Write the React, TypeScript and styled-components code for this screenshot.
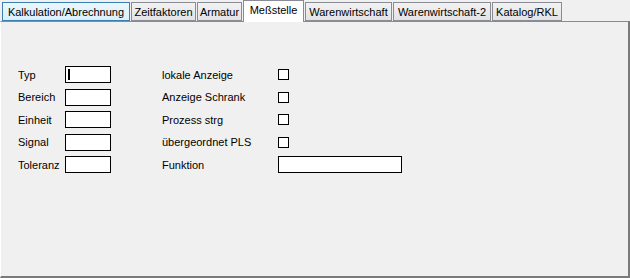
import styled, { createGlobalStyle } from 'styled-components';

const GlobalStyle = createGlobalStyle`
  html, body {
    margin: 0;
    padding: 0;
    background: #f0f0f0;
  }
  body {
    font-family: "Liberation Sans", Arial, sans-serif;
    font-size: 11px;
    color: #000;
  }
`;

const Window = styled.div`
  width: 630px;
  height: 278px;
  display: flex;
  flex-direction: column;
  background: #f0f0f0;
`;

const TabStrip = styled.div`
  height: 21px;
  padding-left: 2px;
  display: flex;
  align-items: flex-end;
  gap: 1px;
`;

const Tab = styled.div<{ $width: number; $active?: boolean; $hover?: boolean }>`
  position: relative;
  z-index: ${p => (p.$active ? 2 : 1)};
  box-sizing: border-box;
  width: ${p => p.$width}px;
  height: ${p => (p.$active ? 22 : 19)}px;
  margin-bottom: ${p => (p.$active ? -1 : 0)}px;
  display: flex;
  align-items: center;
  justify-content: center;
  padding-bottom: ${p => (p.$active ? 3 : 0)}px;
  border: 1px solid ${p => (p.$hover ? '#3c7fb1' : '#898c95')};
  border-bottom: ${p => (p.$active ? 'none' : undefined)};
  background: ${p =>
    p.$active
      ? '#ffffff'
      : p.$hover
      ? 'linear-gradient(#eaf6fd, #d9f0fc)'
      : 'linear-gradient(#f2f2f2, #e3e3e3)'};
  white-space: nowrap;
`;

const Panel = styled.div`
  flex: 1;
  box-sizing: border-box;
  border-top: 1px solid #898c95;
  border-left: 1px solid #ffffff;
  border-right: 2px solid #7a7a7a;
  border-bottom: 2px solid #7a7a7a;
  padding: 44px 0 0 17px;
  display: flex;
  gap: 51px;
`;

const FieldGrid = styled.div<{ $label: number }>`
  display: grid;
  grid-template-columns: ${p => p.$label}px auto;
  grid-auto-rows: 17px;
  row-gap: 5.5px;
  align-items: center;
  align-content: start;
`;

const Label = styled.span`
  white-space: nowrap;
`;

const TextBox = styled.div<{ $width: number }>`
  box-sizing: border-box;
  width: ${p => p.$width}px;
  height: 17px;
  border: 1px solid #000;
  background: #fff;
  display: flex;
  align-items: center;
  padding-left: 2px;
`;

const Caret = styled.span`
  width: 2px;
  height: 11px;
  background: #000;
`;

const CheckBox = styled.div`
  box-sizing: border-box;
  width: 11px;
  height: 11px;
  border: 1px solid #000;
  background: #fff;
`;

const tabs = [
  { label: 'Kalkulation/Abrechnung', width: 128, hover: true },
  { label: 'Zeitfaktoren', width: 65 },
  { label: 'Armatur', width: 45 },
  { label: 'Meßstelle', width: 61, active: true },
  { label: 'Warenwirtschaft', width: 87 },
  { label: 'Warenwirtschaft-2', width: 98 },
  { label: 'Katalog/RKL', width: 70 },
];

const leftFields = ['Typ', 'Bereich', 'Einheit', 'Signal', 'Toleranz'];
const checks = ['lokale Anzeige', 'Anzeige Schrank', 'Prozess strg', 'übergeordnet PLS'];

const App = () => {
  return <>
    <GlobalStyle />
    <Window>
      <TabStrip>
        {tabs.map(t => (
          <Tab key={t.label} $width={t.width} $active={t.active} $hover={t.hover}>
            {t.label}
          </Tab>
        ))}
      </TabStrip>
      <Panel>
        <FieldGrid $label={47}>
          {leftFields.map((f, i) => (
            <>
              <Label key={f}>{f}</Label>
              <TextBox key={f + '-box'} $width={46}>{i === 0 && <Caret />}</TextBox>
            </>
          ))}
        </FieldGrid>
        <FieldGrid $label={116}>
          {checks.map(c => (
            <>
              <Label key={c}>{c}</Label>
              <CheckBox key={c + '-box'} />
            </>
          ))}
          <Label>Funktion</Label>
          <TextBox $width={124} />
        </FieldGrid>
      </Panel>
    </Window>
  </>;
};

export default App;
